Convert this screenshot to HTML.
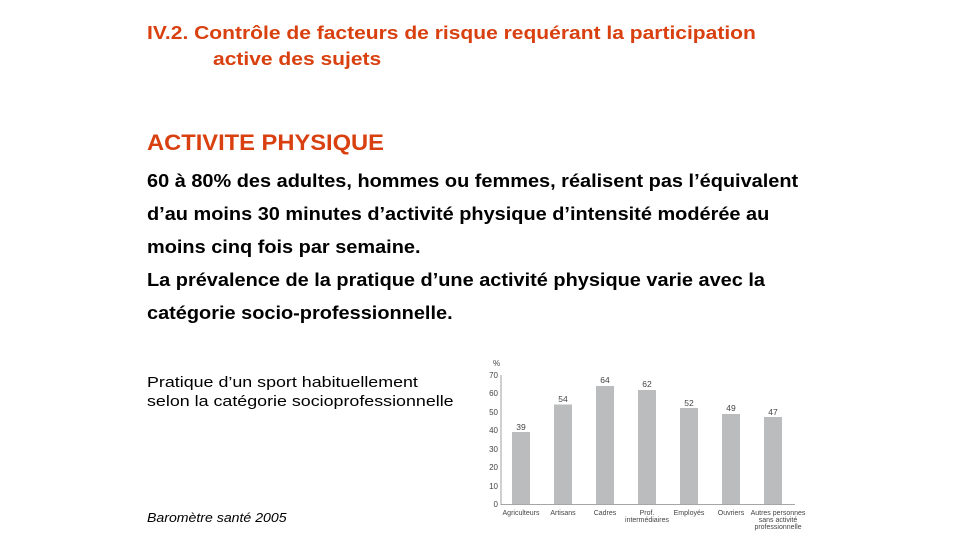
<!DOCTYPE html>
<html><head><meta charset="utf-8"><style>
body{margin:0;width:960px;height:540px;background:#fff;position:relative;overflow:hidden;font-family:"Liberation Sans",Arial,sans-serif}
.t{position:absolute;color:#d9400f;font-weight:bold;white-space:nowrap;transform-origin:0 0}
.b{position:absolute;left:147px;font-weight:bold;font-size:18px;color:#000;white-space:nowrap;line-height:33px;transform:scaleX(1.107);transform-origin:0 0}
.s{position:absolute;left:147px;font-size:15px;color:#000;line-height:19px;white-space:nowrap;transform-origin:0 0}
</style></head><body>
<div class="t" style="left:147px;top:22px;font-size:18.5px;transform:scaleX(1.136)">IV.2. Contrôle de facteurs de risque requérant la participation</div>
<div class="t" style="left:213px;top:48px;font-size:18.5px;transform:scaleX(1.136)">active des sujets</div>
<div class="t" style="left:147px;top:130px;font-size:22px;transform:scaleX(1.077)">ACTIVITE PHYSIQUE</div>
<div class="b" style="top:165px">60 à 80% des adultes, hommes ou femmes, réalisent pas l’équivalent<br>d’au moins 30 minutes d’activité physique d’intensité modérée au<br>moins cinq fois par semaine.<br>La prévalence de la pratique d’une activité physique varie avec la<br>catégorie socio-professionnelle.</div>
<div class="s" style="top:373px;transform:scaleX(1.19)">Pratique d’un sport habituellement<br>selon la catégorie socioprofessionnelle</div>
<div class="s" style="top:508px;font-size:13px;font-style:italic;transform:scaleX(1.085)">Baromètre santé 2005</div>
<svg width="960" height="540" style="position:absolute;left:0;top:0" font-family="Liberation Sans, Arial, sans-serif">
<g fill="#bbbcbe">
<rect x="512" y="432" width="18" height="72"/>
<rect x="554" y="404.5" width="18" height="99.5"/>
<rect x="596" y="386" width="18" height="118"/>
<rect x="638" y="390" width="18" height="114"/>
<rect x="680" y="408" width="18" height="96"/>
<rect x="722" y="414" width="18" height="90"/>
<rect x="764" y="417" width="18" height="87"/>
</g>
<g stroke="#888" stroke-width="0.8" fill="none">
<line x1="501" y1="375" x2="501" y2="505"/>
<line x1="501" y1="504.5" x2="795" y2="504.5"/>
</g>
<g font-size="8" fill="#444" text-anchor="end">
<text x="498" y="507">0</text><text x="498" y="489">10</text><text x="498" y="470">20</text><text x="498" y="452">30</text><text x="498" y="433">40</text><text x="498" y="415">50</text><text x="498" y="396">60</text><text x="498" y="378">70</text>
</g>
<text x="493" y="366" font-size="8" fill="#444">%</text>
<g font-size="8.5" fill="#444" text-anchor="middle">
<text x="521" y="430">39</text><text x="563" y="402">54</text><text x="605" y="383">64</text><text x="647" y="387">62</text><text x="689" y="406">52</text><text x="731" y="411">49</text><text x="773" y="415">47</text>
</g>
<g font-size="7" fill="#444" text-anchor="middle">
<text x="521" y="515">Agriculteurs</text><text x="563" y="515">Artisans</text><text x="605" y="515">Cadres</text>
<text x="647" y="515">Prof.</text><text x="647" y="522">intermédiaires</text>
<text x="689" y="515">Employés</text><text x="731" y="515">Ouvriers</text>
<text x="778" y="515">Autres personnes</text><text x="778" y="522">sans activité</text><text x="778" y="529">professionnelle</text>
</g>
</svg>
</body></html>
